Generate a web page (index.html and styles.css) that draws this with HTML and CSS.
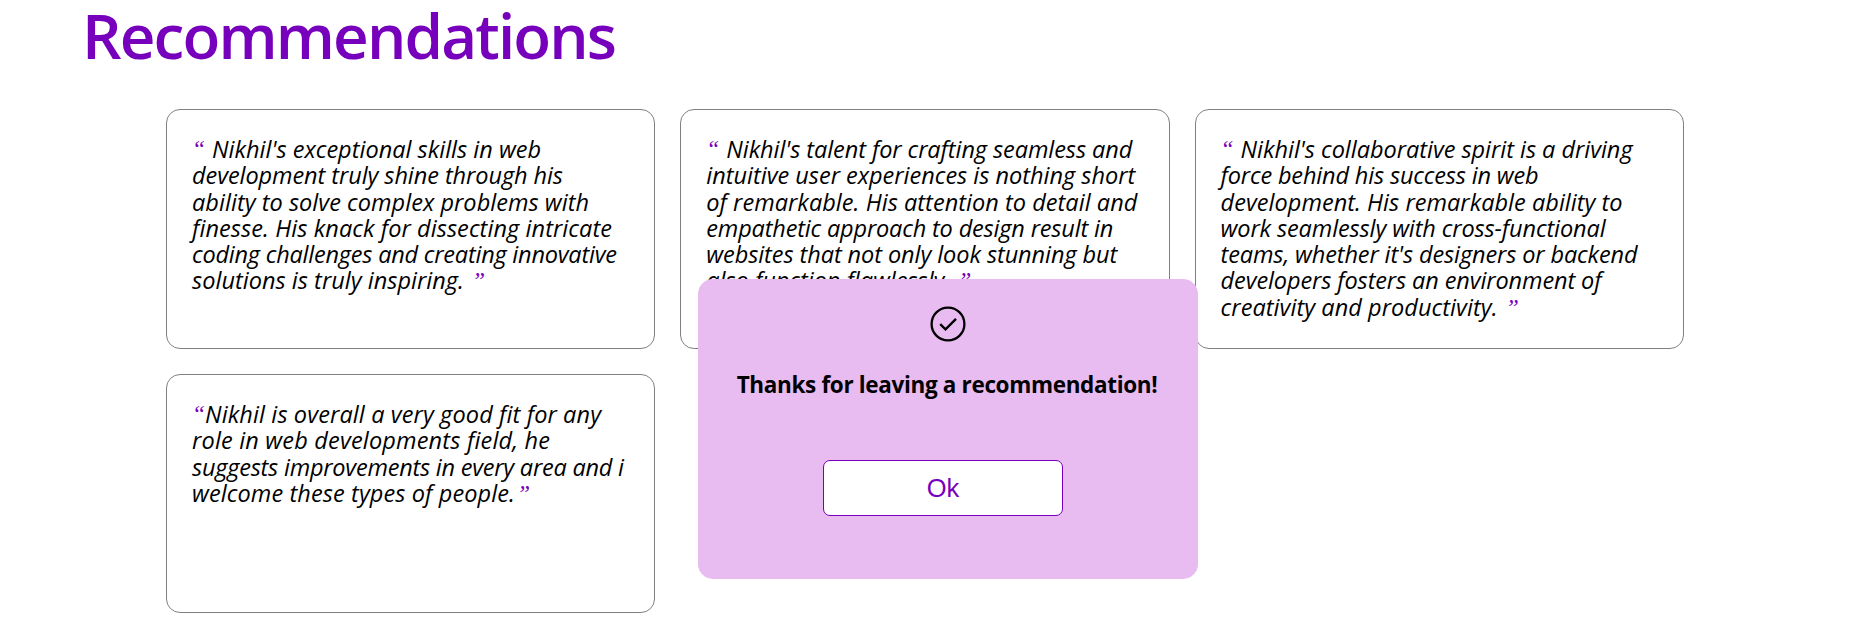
FILE: index.html
```html
<!DOCTYPE html>
<html lang="en">
<head>
<meta charset="utf-8">
<title>Recommendations</title>
<link rel="stylesheet" href="styles.css">
</head>
<body>
<main class="page">
  <h1 class="title"><span class="fit" data-w="535">Recommendations</span></h1>
  <section class="cards">
    <article class="card">
      <p class="line first"><span class="mark">“</span><span class="fit" data-w="329">Nikhil's exceptional skills in web</span></p>
      <p class="line"><span class="fit" data-w="371">development truly shine through his</span></p>
      <p class="line"><span class="fit" data-w="397">ability to solve complex problems with</span></p>
      <p class="line"><span class="fit" data-w="420">finesse. His knack for dissecting intricate</span></p>
      <p class="line"><span class="fit" data-w="425">coding challenges and creating innovative</span></p>
      <p class="line"><span class="fit" data-w="272">solutions is truly inspiring.</span><span class="mark close">”</span></p>
    </article>
    <article class="card">
      <p class="line first"><span class="mark">“</span><span class="fit" data-w="406">Nikhil's talent for crafting seamless and</span></p>
      <p class="line"><span class="fit" data-w="429">intuitive user experiences is nothing short</span></p>
      <p class="line"><span class="fit" data-w="431">of remarkable. His attention to detail and</span></p>
      <p class="line"><span class="fit" data-w="407">empathetic approach to design result in</span></p>
      <p class="line"><span class="fit" data-w="411">websites that not only look stunning but</span></p>
      <p class="line"><span class="fit" data-w="244">also function flawlessly.</span><span class="mark close">”</span></p>
    </article>
    <article class="card">
      <p class="line first"><span class="mark">“</span><span class="fit" data-w="392">Nikhil's collaborative spirit is a driving</span></p>
      <p class="line"><span class="fit" data-w="318">force behind his success in web</span></p>
      <p class="line"><span class="fit" data-w="402">development. His remarkable ability to</span></p>
      <p class="line"><span class="fit" data-w="385">work seamlessly with cross-functional</span></p>
      <p class="line"><span class="fit" data-w="417">teams, whether it's designers or backend</span></p>
      <p class="line"><span class="fit" data-w="381">developers fosters an environment of</span></p>
      <p class="line"><span class="fit" data-w="277">creativity and productivity.</span><span class="mark close">”</span></p>
    </article>
    <article class="card">
      <p class="line first"><span class="mark tight">“</span><span class="fit" data-w="396">Nikhil is overall a very good fit for any</span></p>
      <p class="line"><span class="fit" data-w="358">role in web developments field, he</span></p>
      <p class="line"><span class="fit" data-w="432">suggests improvements in every area and i</span></p>
      <p class="line"><span class="fit" data-w="323">welcome these types of people.</span><span class="mark close near">”</span></p>
    </article>
  </section>
</main>
<div class="popup" role="dialog">
  <svg class="check" viewBox="0 0 36 36" fill="none" stroke="#000">
    <circle cx="18" cy="18" r="16.4" stroke-width="2.3"/>
    <path d="M10.2 18.2l5.3 5.1L26 12.8" stroke-width="2.4"/>
  </svg>
  <h3 class="thanks"><span class="fit" data-w="421">Thanks for leaving a recommendation!</span></h3>
  <button class="ok">Ok</button>
</div>
<script src="fit.js"></script>
</body>
</html>
```
FILE: styles.css
```css
* { box-sizing: border-box; }
body {
  margin: 0;
  height: 632px;
  overflow: hidden;
  background: #fff;
  color: #000;
  font-family: "Trebuchet MS", "Open Sans", sans-serif;
}
.title {
  margin: 0;
  padding: 0 0 0 82px;
  height: 109px;
  font-size: 62px;
  line-height: 71px;
  font-weight: 600;
  color: #7600bc;
}
.fit { display: block; white-space: pre; }
.title .fit { display: inline-block; }
.cards {
  display: grid;
  grid-template-columns: repeat(3, 489.3px);
  grid-template-rows: 240px 239px;
  gap: 25px;
  padding-left: 166px;
}
.card {
  padding: 26px 0 0 25px;
  border: 1px solid gray;
  border-radius: 14px;
}
.line {
  display: flex;
  margin: 0;
  height: 26.3px;
  font-size: 23.5px;
  line-height: 26.3px;
  font-style: italic;
  font-weight: 500;
  white-space: nowrap;
}
.mark {
  width: 20px;
  font-family: "Liberation Serif", serif;
  font-weight: 400;
  color: #7600bc;
}
.tight { width: 13px; }
.close { padding-left: 8px; }
.near { padding-left: 2px; }
.popup {
  position: absolute;
  left: 698px;
  top: 279px;
  width: 500px;
  height: 300px;
  padding-top: 27px;
  display: flex;
  flex-direction: column;
  align-items: center;
  border-radius: 15px;
  background: #e8bcf0;
}
.check { width: 36px; height: 36px; flex: none; }
.thanks {
  margin: 29px 0 0;
  padding-right: 2px;
  font-size: 22.5px;
  line-height: 28px;
  font-weight: 700;
}
.ok {
  width: 240px;
  height: 56px;
  margin: 61px 10px 0 0;
  padding: 0;
  border: 1px solid #7600bc;
  border-radius: 7px;
  background: #fff;
  color: #7600bc;
  font: 25.5px "Liberation Sans", Arial, sans-serif;
}
```
FILE: fit.js
```js
// Spread each line's letters so that it fills its set measure.
document.querySelectorAll('.fit').forEach(el => {
  const range = document.createRange();
  range.selectNodeContents(el);
  const target = Number(el.dataset.w);
  const gap = (target - range.getBoundingClientRect().width) / (el.textContent.length - 1);
  el.style.letterSpacing = gap + 'px';
});
```
